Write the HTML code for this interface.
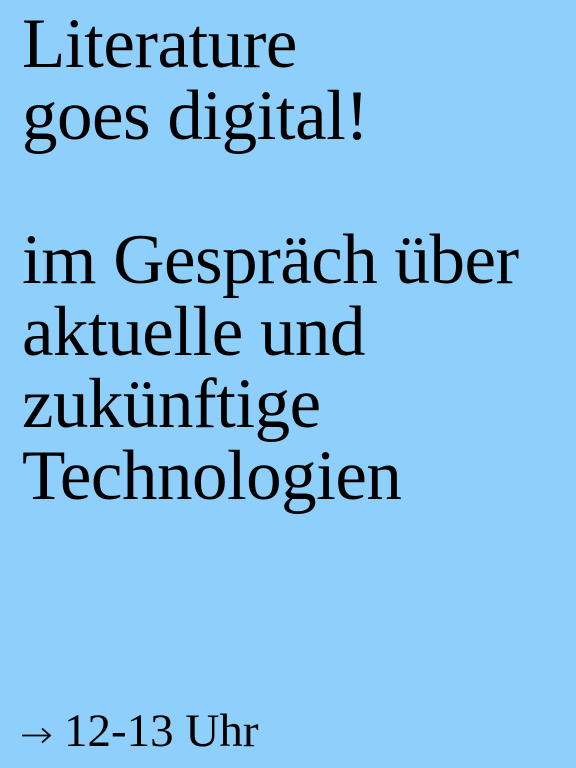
<!DOCTYPE html>
<html><head><meta charset="utf-8"><style>
html,body{margin:0;padding:0;}
body{width:576px;height:768px;background:#8ecffb;position:relative;overflow:hidden;font-family:"Liberation Serif",serif;color:#000;}
.t{position:absolute;left:22px;top:8px;font-size:71px;line-height:72px;letter-spacing:-0.5px;}
.b{position:absolute;left:64px;top:703px;font-size:47px;line-height:56px;white-space:nowrap;}
svg{position:absolute;left:21px;top:725px;}
</style></head><body>
<div class="t">Literature<br>goes digital!<br><br>im Gespräch über<br>aktuelle und<br>zukünftige<br>Technologien</div>
<svg width="32" height="20" viewBox="0 0 32 20"><path d="M1 10.5H29M21 3.5L29 10.5L21 17.5" fill="none" stroke="#000" stroke-width="1.8"/></svg>
<div class="b">12-13 Uhr</div>
</body></html>
